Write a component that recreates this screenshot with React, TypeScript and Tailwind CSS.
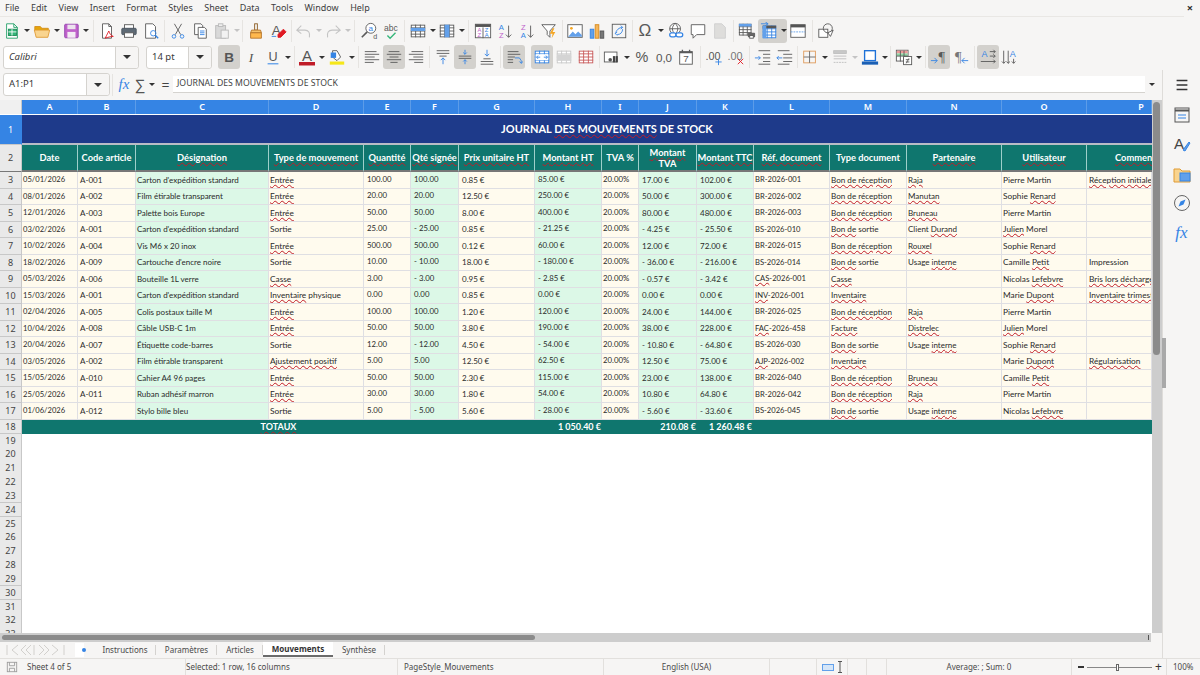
import React from "react";

const UI = "font-['Noto_Sans',sans-serif]";
const LATO = "font-['Lato',sans-serif]";
const COLS = "grid grid-cols-[22px_56px_58px_133px_95px_47px_48px_76px_67px_37px_58px_57px_76px_77px_95px_85px_65px]";

const G = "#5a5a5a";
const B = "#3584e4";
const LB = "#62a0ea";

const Svg = ({ children, s = "w-[18px] h-[18px]" }: { children: React.ReactNode; s?: string }) => (
  <svg viewBox="0 0 20 20" fill="none" className={s} strokeWidth="1" stroke={G}>{children}</svg>
);
const Txt = (p: { x: number; y: number; c?: string; z?: number; w?: number; f?: string; it?: boolean; children: React.ReactNode }) => (
  <text x={p.x} y={p.y} fill={p.c ?? G} stroke="none" fontSize={p.z ?? 9} fontWeight={p.w ?? 400} fontStyle={p.it ? "italic" : "normal"} fontFamily={p.f ?? "Liberation Sans"} textAnchor="middle">{p.children}</text>
);
const Lines = ({ l }: { l: [number, number, number][] }) => (
  <>{l.map(([a, b, y], i) => <path key={i} d={`M${a} ${y}H${b}`} />)}</>
);
const Table = ({ x = 2, y = 3, w = 16, h = 14, c = G }: { x?: number; y?: number; w?: number; h?: number; c?: string }) => (
  <g stroke={c}>
    <rect x={x + .5} y={y + .5} width={w - 1} height={h - 1} fill="#fff" />
    <path d={`M${x} ${y + h / 4}H${x + w}M${x} ${y + h / 2}H${x + w}M${x} ${y + 3 * h / 4}H${x + w}M${x + w / 3} ${y}V${y + h}M${x + 2 * w / 3} ${y}V${y + h}`} />
  </g>
);

const I: Record<string, React.ReactNode> = {
  neu: <Svg><path d="M4 2h8l4 4v12H4z" fill="#fff" stroke="#26a269" /><path d="M12 2v4h4" stroke="#26a269" /><rect x="6" y="8" width="9" height="7" fill="#33b679" stroke="#1c8a56" /><path d="M6 11h9M10 8v7" stroke="#fff" /></Svg>,
  open: <Svg><path d="M2 5h6l2 2h7v3H2z" fill="#e5a50a" stroke="#d48f1d" /><path d="M1.5 9h17l-2 8h-13z" fill="#f9d48f" stroke="#e09b35" /></Svg>,
  save: <Svg><rect x="3" y="2.5" width="15" height="15" rx="1" fill="#c061cb" stroke="#9141ac" /><rect x="6" y="3" width="9" height="5" fill="#ece3ee" stroke="none" /><rect x="6" y="11" width="9" height="6.5" fill="#f3eaf4" stroke="none" /></Svg>,
  pdf: <Svg><path d="M5 2h7l3 3v13H5z" fill="#fff" /><path d="M12 2v3h3" /><path d="M8 18c2-4 3-6 4-8 1 3 2 5 5 6-3 0-6 1-9 2z" stroke="#e01b24" /></Svg>,
  print: <Svg><rect x="5" y="3" width="10" height="5" fill="#fff" /><rect x="2" y="7" width="16" height="7" rx="1" fill="#5e6a75" stroke="#4a5560" /><rect x="5" y="12" width="10" height="5" fill="#fff" /></Svg>,
  prev: <Svg><path d="M4 2h8l3 3v13H4z" fill="#fff" /><circle cx="12.5" cy="12.5" r="3" stroke={B} /><path d="M15 15l3 3" stroke={B} strokeWidth="1.6" /></Svg>,
  cut: <Svg><path d="M6 2l7 12M14 2L7 14" /><circle cx="5.5" cy="16" r="2" stroke={B} /><circle cx="14.5" cy="16" r="2" stroke={B} /></Svg>,
  copy: <Svg><path d="M4 2h7l2 2v10H4z" fill="#fff" /><path d="M8 6h7l2 2v10H8z" fill="#fff" /><path d="M10 10h5M10 12h5M10 14h5" stroke={B} /></Svg>,
  paste: <Svg><g stroke="#b9b9b9"><rect x="3" y="4" width="11" height="14" fill="#d9d9d9" /><rect x="6" y="2" width="5" height="3" fill="#eee" /><rect x="9" y="9" width="8" height="9" fill="#f2f2f2" /></g></Svg>,
  clone: <Svg><rect x="8.5" y="2" width="3" height="7" stroke="#8a5a20" /><path d="M5 9h10l1 3H4z" fill="#f5c26b" stroke="#b5742a" /><path d="M4 12h12v6H4z" fill="#ffb84d" stroke="#b5742a" /></Svg>,
  clear: <Svg><Txt x={8} y={14} z={15} c={G}>A</Txt><path d="M3 16h5" stroke={B} /><path d="M10 14l6-6 3 3-6 6h-3z" fill="#e01b24" stroke="#e01b24" /></Svg>,
  undo: <Svg><g stroke="#c4c4c4"><path d="M7 4L2 9l5 4M2 9h9c4 0 6 3 5 8" strokeWidth="1.2" /></g></Svg>,
  redo: <Svg><g stroke="#c4c4c4"><path d="M13 4l5 5-5 4M18 9H9c-4 0-6 3-5 8" strokeWidth="1.2" /></g></Svg>,
  find: <Svg><circle cx="12" cy="7" r="5.5" fill="#fff" /><path d="M8 11l-6 6" strokeWidth="1.8" /><Txt x={12} y={10} z={9} c={B}>a</Txt><Txt x={17} y={19} z={8}>d</Txt></Svg>,
  spell: <Svg><Txt x={10} y={10} z={9.5} c={G}>abc</Txt><path d="M6 15l3 3 6-6" stroke="#33b679" strokeWidth="1.5" /></Svg>,
  row: <Svg><Table /><rect x="2" y="6.5" width="16" height="3.5" fill={LB} stroke="none" /></Svg>,
  col: <Svg><Table /><rect x="7.3" y="3" width="5.4" height="14" fill={LB} stroke="none" /></Svg>,
  sort: <Svg><rect x="1.5" y="2.5" width="17" height="15" fill="#fff" /><rect x="1.5" y="2.5" width="17" height="3" fill="#555" stroke="none" /><Txt x={6} y={11} z={6.5} c="#c061cb">A</Txt><Txt x={6} y={17} z={6.5} c="#c061cb">Z</Txt><Txt x={14} y={11} z={6.5} c={B}>Z</Txt><Txt x={14} y={17} z={6.5} c={B}>A</Txt><path d="M10 6v12" /></Svg>,
  asc: <Svg><Txt x={6} y={9} z={8.5} c={B}>A</Txt><Txt x={6} y={18} z={8.5} c="#c061cb">Z</Txt><path d="M14 4v13M11 14l3 3 3-3" /></Svg>,
  desc: <Svg><Txt x={6} y={9} z={8.5} c="#c061cb">Z</Txt><Txt x={6} y={18} z={8.5} c={B}>A</Txt><path d="M14 4v13M11 14l3 3 3-3" /></Svg>,
  filter: <Svg><path d="M2 3h15l-6 7v7l-3-3v-4z" fill="#fff" /><path d="M14 7l-3 6h3l-1 5 4-7h-3l2-4z" fill="#f5a623" stroke="none" /></Svg>,
  img: <Svg><rect x="2" y="3" width="16" height="14" fill="#fff" /><circle cx="6" cy="7" r="1.5" fill="#f5a623" stroke="none" /><path d="M2.5 16.5l5-6 3 3 3-3 4 4v2z" fill={LB} stroke="none" /></Svg>,
  chart: <Svg><rect x="2.5" y="8" width="4" height="10" fill={LB} stroke={B} /><rect x="8" y="3" width="4" height="15" fill="#f5b65b" stroke="#d98a1d" /><rect x="13.5" y="10" width="4" height="8" fill="#777" stroke="#555" /></Svg>,
  pivot: <Svg><rect x="2.5" y="2.5" width="15" height="15" fill="#f5f5f5" /><path d="M6 13c1-4 4-7 8-7M12 4l2 2-2 2M8 11l-2 2 2 2M14 8c0 3-2 6-6 6" stroke={B} /></Svg>,
  omega: <Svg><Txt x={10} y={16} z={19}>Ω</Txt></Svg>,
  link: <Svg><circle cx="9" cy="7.5" r="6" fill="#fff" /><path d="M3 7.5h12M9 1.5c-4 4-4 8 0 12M9 1.5c4 4 4 8 0 12" /><g stroke={B} strokeWidth="1.4"><rect x="3" y="12" width="7" height="4.5" rx="2.2" fill="#fff" /><rect x="10" y="12" width="7.5" height="4.5" rx="2.2" fill="#fff" /></g></Svg>,
  comment: <Svg><path d="M2.5 3h15v11h-9l-4 4v-4h-2z" fill="#fff" /></Svg>,
  hf: <Svg><path d="M4 2h8l4 4v12H4z" fill="#dedddb" stroke="#cfcfcf" /></Svg>,
  parea: <Svg><Table x={1} y={2} w={14} h={13} /><rect x="1" y="2" width="14" height="3" fill={LB} stroke="none" /><rect x="11" y="12" width="8" height="5" rx="1" fill="#666" stroke="none" /><rect x="13" y="15" width="4" height="3" fill="#fff" /></Svg>,
  freeze: <Svg><Table x={3} y={4} w={15} h={14} c={B} /><rect x="3" y="4" width="15" height="3" fill="#555" stroke="none" /><rect x="3" y="4" width="4" height="14" fill={LB} stroke="none" /><path d="M1 2h8M6 0l3 2-3 2" stroke={B} /></Svg>,
  split: <Svg><rect x="2" y="3" width="16" height="14" fill="#fff" /><rect x="2" y="3" width="16" height="3" fill="#555" stroke="none" /><path d="M2 11h16" stroke={LB} strokeDasharray="2 1" /></Svg>,
  shapes: <Svg><rect x="2" y="8" width="10" height="9" fill="#fff" /><circle cx="12" cy="7" r="5" /><path d="M12 12l6-3-3 7z" fill="#fff" /></Svg>,
  bold: <Svg><Txt x={10} y={15} z={15} w={700} c="#555">B</Txt></Svg>,
  ital: <Svg><Txt x={10} y={15} z={15} it f="Liberation Serif" c="#555">I</Txt></Svg>,
  und: <Svg><Txt x={10} y={14} z={14} c="#555">U</Txt><path d="M4 17.500h12" stroke={LB} strokeWidth="1.500" /></Svg>,
  fcolor: <Svg s="w-[20px] h-[20px]"><Txt x={10} y={14} z={15} c="#555">A</Txt><rect x="2" y="15" width="16" height="3.500" fill="#c01c28" stroke="none" /></Svg>,
  bg: <Svg><path d="M5 3h5l4 7-4 4-4-3z" fill="#fff" /><rect x="3" y="5" width="6" height="6" fill={B} stroke="none" /><rect x="2" y="15" width="16" height="3.500" fill="#f6e71a" stroke="none" /></Svg>,
  al: <Svg><Lines l={[[2, 15, 4], [2, 18, 7], [2, 13, 10], [2, 18, 13], [2, 12, 16]]} /></Svg>,
  ac: <Svg><Lines l={[[4, 16, 4], [2, 18, 7], [5, 15, 10], [2, 18, 13], [6, 14, 16]]} /></Svg>,
  ar: <Svg><Lines l={[[5, 18, 4], [2, 18, 7], [7, 18, 10], [2, 18, 13], [8, 18, 16]]} /></Svg>,
  vt: <Svg><Lines l={[[3, 17, 3], [3, 17, 6], [6, 14, 9]]} /><path d="M10 18v-7M7.500 13.500L10 11l2.500 2.500" stroke={B} /></Svg>,
  vc: <Svg><Lines l={[[3, 17, 9], [3, 17, 11.500]]} /><path d="M10 2v5M8 5l2 2 2-2M10 18v-5M8 15l2-2 2 2" stroke={B} /></Svg>,
  vb: <Svg><Lines l={[[6, 14, 12], [3, 17, 15], [3, 17, 18]]} /><path d="M10 2v7M7.500 6.500L10 9l2.500-2.500" stroke={B} /></Svg>,
  wrap: <Svg><Lines l={[[3, 15, 4], [3, 17, 7], [3, 11, 10], [3, 9, 13], [3, 9, 16]]} /><path d="M11 11h5l2 3v3M16 15l2 2 2-2" stroke={B} /></Svg>,
  merge: <Svg><Table x={2} y={3} w={16} h={14} c={B} /><rect x="3" y="7" width="14" height="6.500" fill="#fff" stroke="none" /><path d="M4 10.200h4M12 10.200h4M5.500 8.500L4 10.200l1.500 1.800M14.500 8.500l1.500 1.700-1.500 1.800" stroke={B} /></Svg>,
  mergeg: <Svg><Table x={2} y={3} w={16} h={14} c="#c8c8c8" /><rect x="2" y="7" width="16" height="7" fill="#d4d4d4" stroke="none" /></Svg>,
  unm: <Svg><Table x={2} y={3} w={16} h={14} c="#c85a5a" /></Svg>,
  cur: <Svg><rect x="1.500" y="4.500" width="14" height="11" fill="#fff" /><circle cx="8" cy="13" r="2" fill="#555" stroke="none" /><rect x="11" y="9" width="2.500" height="7" fill="#444" stroke="none" /><rect x="14" y="9" width="2.500" height="7" fill="#444" stroke="none" /></Svg>,
  pct: <Svg><Txt x={10} y={16} z={16} c="#555">%</Txt></Svg>,
  num: <Svg><Txt x={10} y={15} z={13} c="#555">0,0</Txt></Svg>,
  date: <Svg><rect x="3" y="4" width="14" height="14" fill="#fff" /><path d="M3 5h14M6 2v3M14 2v3" strokeWidth="1.500" /><Txt x={10} y={16} z={11}>7</Txt></Svg>,
  dadd: <Svg><Txt x={9} y={13} z={12} c="#555">.00</Txt><path d="M15 12v7M11.500 15.500h7" stroke={B} /></Svg>,
  ddel: <Svg><Txt x={9} y={13} z={12} c="#777">.00</Txt><path d="M12 12l6 6M18 12l-6 6" stroke="#e01b24" /></Svg>,
  ind: <Svg><Lines l={[[5, 18, 3], [10, 18, 7], [10, 18, 11], [10, 18, 15], [5, 18, 18]]} /><path d="M1 11h6M5 9l2 2-2 2" stroke={B} /></Svg>,
  out: <Svg><Lines l={[[2, 15, 3], [8, 18, 7], [8, 18, 11], [8, 18, 15], [2, 15, 18]]} /><path d="M7 11H1M3 9l-2 2 2 2" stroke={B} /></Svg>,
  bord: <Svg><rect x="3" y="3.500" width="13" height="13" stroke="#e09b5b" /><path d="M3 10h13M9.500 3.500v13" stroke="#666" /></Svg>,
  bstyle: <Svg><g stroke="#bdbdbd"><rect x="3" y="3" width="14" height="3" fill="#c9c9c9" /><path d="M3 9h14M3 12h14" /><path d="M3 16h14" strokeDasharray="2 1" /></g></Svg>,
  bcolor: <Svg><rect x="4" y="3" width="12" height="11" fill="#fff" stroke="#1c71d8" strokeWidth="1.500" /><rect x="1" y="15" width="18" height="3.500" fill="#1a5fb4" stroke="none" /></Svg>,
  cond: <Svg><rect x="1.500" y="2.500" width="13" height="12" fill="#fff" /><rect x="2" y="3" width="12" height="3" fill="#ed9a9a" stroke="none" /><rect x="2" y="6" width="12" height="3" fill="#90d6a5" stroke="none" /><path d="M1.500 9h13M6 3v12M10 3v12" /><rect x="9.500" y="9.500" width="9" height="9" fill="#fff" /><path d="M12 13h4M12 15.500h4M15.500 11.500l-3 5.500" /></Svg>,
  ltr: <Svg><Txt x={13} y={15} z={16} f="Liberation Serif">¶</Txt><path d="M1 14h7M5 11l3 3-3 3" stroke={B} /></Svg>,
  rtl: <Svg><Txt x={7} y={15} z={16} f="Liberation Serif" c="#777">¶</Txt><path d="M18 14h-7M14 11l-3 3 3 3" stroke={B} /></Svg>,
  hz: <Svg><Txt x={6} y={10} z={10} c={B}>A</Txt><path d="M12 4h6M16 2l2 2-2 2M12 9h6M16 7l2 2-2 2M2 15h16M16 13l2 2-2 2" /></Svg>,
  vr: <Svg><Txt x={13} y={10} z={10} c={B}>A</Txt><path d="M3 3v14M1 15l2 2 2-2M8 3v14M6 15l2 2 2-2M14 12v5M12 15l2 2 2-2" /></Svg>,
};

const Tri = ({ c = "border-t-[#333]" }: { c?: string }) => (
  <span className={`w-0 h-0 border-l-[3px] border-r-[3px] border-t-[3px] border-l-transparent border-r-transparent ${c}`} />
);
const A = ({ w = "w-[8px]", off }: { w?: string; off?: boolean }) => (
  <div className={`${w} h-[24px] flex items-center justify-center shrink-0`}><Tri c={off ? "border-t-[#c4c4c4]" : "border-t-[#333]"} /></div>
);
const S = ({ w = "w-[5px]" }: { w?: string }) => (
  <div className={`${w} h-[24px] flex items-center justify-center shrink-0`}><div className="w-px h-[22px] bg-[#e6e4e1]" /></div>
);
const Btn = ({ n, on }: { n: string; on?: boolean }) => (
  <div className={`w-[22px] h-[24px] rounded-[3px] flex items-center justify-center shrink-0 ${on ? "bg-[#d3d1cd]" : ""}`}>{I[n]}</div>
);

const Combo = ({ w, dw, text, it }: { w: string; dw: string; text: string; it?: boolean }) => (
  <div className={`${w} h-[23px] bg-white border border-[#d5d3cf] rounded-[3px] flex items-stretch shrink-0`}>
    <div className={`flex-1 flex items-center pl-[5px] text-[9.5px] text-[#3a3a3a] ${it ? "italic" : ""} ${UI}`}>{text}</div>
    <div className={`${dw} bg-[#f6f5f4] border-l border-[#d5d3cf] rounded-r-[3px] flex items-center justify-center`}>
      <span className="w-0 h-0 border-l-[4px] border-r-[4px] border-t-[4px] border-l-transparent border-r-transparent border-t-[#333]" />
    </div>
  </div>
);

const Wavy = ({ t }: { t: string }) => (
  <>
    {t.split("*").map((p, i) =>
      i % 2 ? (
        <span key={i} className="underline decoration-wavy decoration-[#c01c28] decoration-1 underline-offset-1">{p}</span>
      ) : (
        <span key={i}>{p}</span>
      )
    )}
  </>
);

const letters = "ABCDEFGHIJKLMNO".split("");
const pads = ["pl-px", "pl-0.5", "pl-px", "pl-px", "pl-[3px]", "pl-[3px]", "pl-[3px]", "pl-[3px]", "pl-px", "pl-[3px]", "pl-[3px]", "pl-px", "pl-px", "pl-px", "pl-px", "pl-0.5"];
const sizes = ["text-[7.6px]", "text-[8px]", "text-[8px]", "text-[8.3px]", "text-[7.8px]", "text-[7.8px]", "text-[8px]", "text-[7.8px]", "text-[7.8px]", "text-[8px]", "text-[8px]", "text-[7.6px]", "text-[8.1px]", "text-[8px]", "text-[8.3px]", "text-[8.3px]"];
const mint = [2, 5, 7, 9, 10];

const heads = ["Date", "Code article", "*Désignation*", "*Type de mouvement*", "*Quantité*", "*Qté signée*", "*Prix unitaire HT*", "*Montant HT*", "TVA %", "*Montant* TVA", "*Montant TTC*", "*Réf. document*", "Type document", "*Partenaire*", "*Utilisateur*"];

const C1 = "Carton d'expédition standard";
const E = "*Entrée*";
const BR = "*Bon de réception*";
const BS = "*Bon de* sortie";
const R = "20.00%";
const rows: string[][] = [
  ["05/01/2026", "A-001", C1, E, "100.00", "100.00", "0.85 €", "85.00 €", R, "17.00 €", "102.00 €", "BR-2026-001", BR, "*Raja*", "Pierre Martin", "*Réception initiale*"],
  ["08/01/2026", "A-002", "Film étirable transparent", E, "20.00", "20.00", "12.50 €", "250.00 €", R, "50.00 €", "300.00 €", "BR-2026-002", BR, "*Manutan*", "Sophie *Renard*", ""],
  ["12/01/2026", "A-003", "Palette bois Europe", E, "50.00", "50.00", "8.00 €", "400.00 €", R, "80.00 €", "480.00 €", "BR-2026-003", BR, "*Bruneau*", "Pierre Martin", ""],
  ["03/02/2026", "A-001", C1, "Sortie", "25.00", "- 25.00", "0.85 €", "- 21.25 €", R, "- 4.25 €", "- 25.50 €", "BS-2026-010", BS, "Client *Durand*", "*Julien* Morel", ""],
  ["10/02/2026", "A-004", "Vis M6 x 20 inox", E, "500.00", "500.00", "0.12 €", "60.00 €", R, "12.00 €", "72.00 €", "BR-2026-015", BR, "*Rouxel*", "Sophie *Renard*", ""],
  ["18/02/2026", "A-009", "Cartouche d'encre noire", "Sortie", "10.00", "- 10.00", "18.00 €", "- 180.00 €", R, "- 36.00 €", "- 216.00 €", "BS-2026-014", BS, "Usage *interne*", "Camille *Petit*", "Impression"],
  ["05/03/2026", "A-006", "Bouteille 1L verre", "*Casse*", "3.00", "- 3.00", "0.95 €", "- 2.85 €", R, "- 0.57 €", "- 3.42 €", "*CAS*-2026-001", "*Casse*", "", "Nicolas *Lefebvre*", "*Bris lors déchargement*"],
  ["15/03/2026", "A-001", C1, "*Inventaire* physique", "0.00", "0.00", "0.85 €", "0.00 €", R, "0.00 €", "0.00 €", "*INV*-2026-001", "*Inventaire*", "", "Marie *Dupont*", "*Inventaire trimestriel*"],
  ["02/04/2026", "A-005", "Colis postaux taille M", E, "100.00", "100.00", "1.20 €", "120.00 €", R, "24.00 €", "144.00 €", "BR-2026-025", BR, "*Raja*", "Pierre Martin", ""],
  ["10/04/2026", "A-008", "Câble USB-C 1m", E, "50.00", "50.00", "3.80 €", "190.00 €", R, "38.00 €", "228.00 €", "*FAC*-2026-458", "*Facture*", "*Distrelec*", "*Julien* Morel", ""],
  ["20/04/2026", "A-007", "Étiquette code-barres", "Sortie", "12.00", "- 12.00", "4.50 €", "- 54.00 €", R, "- 10.80 €", "- 64.80 €", "BS-2026-030", BS, "Usage *interne*", "Sophie *Renard*", ""],
  ["03/05/2026", "A-002", "Film étirable transparent", "*Ajustement positif*", "5.00", "5.00", "12.50 €", "62.50 €", R, "12.50 €", "75.00 €", "*AJP*-2026-002", "*Inventaire*", "", "Marie *Dupont*", "*Régularisation*"],
  ["15/05/2026", "A-010", "Cahier A4 96 pages", E, "50.00", "50.00", "2.30 €", "115.00 €", R, "23.00 €", "138.00 €", "BR-2026-040", BR, "*Bruneau*", "Camille *Petit*", ""],
  ["25/05/2026", "A-011", "Ruban adhésif marron", E, "30.00", "30.00", "1.80 €", "54.00 €", R, "10.80 €", "64.80 €", "BR-2026-042", BR, "*Raja*", "Pierre Martin", ""],
  ["01/06/2026", "A-012", "Stylo bille bleu", "Sortie", "5.00", "- 5.00", "5.60 €", "- 28.00 €", R, "- 5.60 €", "- 33.60 €", "BS-2026-045", BS, "Usage *interne*", "Nicolas *Lefebvre*", ""],
];
const blanks = Array.from({ length: 15 }, (_, i) => 19 + i);

const RowHead = ({ n, active, bottom = "border-b-[#c8c8c8]" }: { n: number; active?: boolean; bottom?: string }) => (
  <div className={`flex items-center justify-center text-[9px] border-r border-b ${bottom} ${UI} ${active ? "bg-[#3584e4] text-white border-r-[#3584e4]" : "bg-[#e9e9e9] text-[#444] border-r-[#c8c8c8]"}`}>{n}</div>
);

const tabs = [
  { t: "Instructions", w: "w-[62px]" },
  { t: "Paramètres", w: "w-[61px]" },
  { t: "Articles", w: "w-[46px]" },
  { t: "Mouvements", w: "w-[70px]", on: true },
  { t: "Synthèse", w: "w-[52px]" },
];

const StatusCell = ({ w, children, c = "" }: { w: string; children?: React.ReactNode; c?: string }) => (
  <div className={`${w} h-full flex items-center border-r border-[#e2e0dd] shrink-0 ${c}`}>{children}</div>
);

export default function App() {
  return (
    <div className={`w-[1200px] h-[675px] overflow-hidden bg-[#f6f5f4] flex flex-col text-[#3d3d3d] ${UI}`}>
      {/* menu */}
      <div className="h-[16px] shrink-0 flex items-center relative text-[9px] text-[#3d3d3d]">
        <div className="flex items-center gap-[11.5px] pl-[5px]">
          {["File", "Edit", "View", "Insert", "Format", "Styles", "Sheet", "Data", "Tools", "Window", "Help"].map((m) => <span key={m}>{m}</span>)}
        </div>
        <span className="absolute right-[7px] top-0 text-[11px] leading-[16px] font-bold text-[#333]">×</span>
      </div>
      {/* toolbar 1 */}
      <div className="h-[28px] shrink-0 flex items-center pl-px mr-[16px] border-t border-[#e9e7e4]">
        <Btn n="neu" /><A /><Btn n="open" /><A w="w-[7px]" /><Btn n="save" /><A /><S w="w-[6px]" />
        <Btn n="pdf" /><Btn n="print" /><Btn n="prev" /><S />
        <Btn n="cut" /><Btn n="copy" /><Btn n="paste" /><A w="w-[7px]" off /><S />
        <Btn n="clone" /><Btn n="clear" /><S w="w-[4px]" />
        <Btn n="undo" /><A w="w-[7px]" off /><Btn n="redo" /><A w="w-[7px]" off /><S w="w-[7px]" />
        <Btn n="find" /><Btn n="spell" /><S />
        <Btn n="row" /><A w="w-[7px]" /><Btn n="col" /><A w="w-[7px]" /><S w="w-[7px]" />
        <Btn n="sort" /><Btn n="asc" /><Btn n="desc" /><Btn n="filter" /><S w="w-[4px]" />
        <Btn n="img" /><Btn n="chart" /><Btn n="pivot" /><S w="w-[4px]" />
        <Btn n="omega" /><A w="w-[9px]" /><Btn n="link" /><Btn n="comment" /><Btn n="hf" /><S />
        <Btn n="parea" />
        <div className="w-[29px] h-[24px] bg-[#d3d1cd] rounded-[3px] flex items-center shrink-0"><Btn n="freeze" /><A w="w-[7px]" /></div>
        <Btn n="split" /><S w="w-[6px]" /><Btn n="shapes" />
      </div>
      {/* toolbar 2 */}
      <div className="h-[26px] shrink-0 flex items-center pl-[3px]">
        <Combo w="w-[136px]" dw="w-[23px]" text="Calibri" it />
        <div className="w-[7px] shrink-0" />
        <Combo w="w-[66px]" dw="w-[23px]" text="14 pt" />
        <div className="w-[6px] shrink-0" />
        <Btn n="bold" on /><Btn n="ital" /><Btn n="und" /><A /><S w="w-[4px]" />
        <Btn n="fcolor" /><A /><Btn n="bg" /><A w="w-[7px]" /><S w="w-[6px]" />
        <Btn n="al" /><Btn n="ac" on /><Btn n="ar" /><S />
        <Btn n="vt" /><Btn n="vc" on /><Btn n="vb" /><S />
        <Btn n="wrap" on /><div className="w-[6px] shrink-0" />
        <Btn n="merge" on /><Btn n="mergeg" /><Btn n="unm" /><S w="w-[4px]" />
        <Btn n="cur" /><A /><Btn n="pct" /><Btn n="num" /><Btn n="date" /><S w="w-[6px]" />
        <Btn n="dadd" /><Btn n="ddel" /><S />
        <Btn n="ind" /><Btn n="out" /><S w="w-[3px]" />
        <Btn n="bord" /><A /><Btn n="bstyle" /><A off /><Btn n="bcolor" /><A w="w-[7px]" /><S />
        <Btn n="cond" /><A w="w-[7px]" /><S w="w-[6px]" />
        <Btn n="ltr" on /><Btn n="rtl" /><S />
        <Btn n="hz" on /><Btn n="vr" />
      </div>
      {/* body */}
      <div className="flex-1 min-h-0 flex">
        <div className="w-[1162px] shrink-0 flex flex-col">
          {/* formula bar */}
          <div className="h-[30px] shrink-0 flex items-center pl-[3px] pb-px">
            <Combo w="w-[107px]" dw="w-[23px]" text="A1:P1" />
            <S w="w-[4px]" />
            <div className="w-[20px] flex justify-center shrink-0"><span className="font-['Liberation_Serif',serif] italic text-[15px] leading-none text-[#3584e4]">fx</span></div>
            <div className="w-[12px] flex justify-center shrink-0 text-[15px] leading-none text-[#555]">∑</div>
            <A w="w-[12px]" />
            <div className="w-[15px] flex justify-center shrink-0 text-[14px] leading-none text-[#444]">=</div>
            <div className="w-[972px] h-[17px] bg-white border-b border-[#d5d3cf] flex items-center pl-[4px] text-[8.7px] text-[#444] shrink-0">JOURNAL DES MOUVEMENTS DE STOCK</div>
            <div className="w-[14px] flex justify-center shrink-0"><Tri /></div>
          </div>
          {/* sheet + v scrollbar */}
          <div className="h-[533px] shrink-0 flex">
            <div className="w-[1152px] shrink-0 bg-white overflow-hidden">
              {/* col headers */}
              <div className={`${COLS} h-[15px] border-b border-white`}>
                <div className="bg-[#f0f0f0] border-r border-[#c8c8c8]" />
                {[...letters, "P"].map((l, i) => (
                  <div key={l} className={`bg-[#3584e4] text-white text-[9px] font-semibold border-r border-[#5c9ce8] overflow-hidden ${i === 15 ? "flex justify-start" : "flex items-center justify-center"}`}>
                    {i === 15 ? <span className="w-[108px] shrink-0 text-center">{l}</span> : l}
                  </div>
                ))}
              </div>
              {/* row 1 */}
              <div className={`${COLS} h-[30px]`}>
                <RowHead n={1} active />
                <div className={`col-span-16 bg-[#1e3a8a] border-b-2 border-[#b9bcc6] flex items-center justify-center pl-[40px] text-white font-bold text-[11px] ${LATO}`}><span><Wavy t="JOURNAL *DES MOUVEMENTS* DE STOCK" /></span></div>
              </div>
              {/* row 2 */}
              <div className={`${COLS} h-[27px]`}>
                <RowHead n={2} bottom="border-b-[#777]" />
                {heads.map((h, i) => (
                  <div key={i} className={`bg-[#0f766e] border-r border-[#9ecfca] border-b-2 border-b-[#777] flex items-center justify-center text-center text-white font-bold text-[9.3px] leading-[11px] px-px ${i === 9 ? "" : "whitespace-nowrap"} ${LATO}`}>
                    <span><Wavy t={h} /></span>
                  </div>
                ))}
                <div className={`bg-[#0f766e] border-b-2 border-b-[#777] overflow-hidden flex items-center text-white font-bold text-[9.3px] ${LATO}`}>
                  <span className="w-[116px] shrink-0 text-center"><Wavy t="*Commentaires*" /></span>
                </div>
              </div>
              {/* data */}
              {rows.map((r, ri) => (
                <div key={ri} className={`${COLS} h-[16.5px]`}>
                  <RowHead n={ri + 3} />
                  {r.map((c, ci) => (
                    <div key={ci} className={`${mint.includes(ci) ? "bg-[#dcf8e7]" : "bg-[#fffbee]"} border-r border-b border-[#dfdfe3] flex items-center overflow-hidden whitespace-nowrap text-[#2a2a2a] ${sizes[ci]} ${pads[ci]} ${LATO}`}>
                      <span className="shrink-0"><Wavy t={c} /></span>
                    </div>
                  ))}
                </div>
              ))}
              {/* totals */}
              <div className={`${COLS} h-[14px]`}>
                <RowHead n={18} />
                <div className={`col-span-7 bg-[#0f766e] flex items-center justify-center text-white font-bold text-[9px] ${LATO}`}><span><Wavy t="*TOTAUX*" /></span></div>
                <div className={`bg-[#0f766e] flex items-center justify-end pr-px text-white font-bold text-[9px] whitespace-nowrap ${LATO}`}>1 050.40 €</div>
                <div className="bg-[#0f766e]" />
                <div className={`bg-[#0f766e] flex items-center justify-end pr-px text-white font-bold text-[9px] whitespace-nowrap ${LATO}`}>210.08 €</div>
                <div className={`bg-[#0f766e] flex items-center justify-end pr-0.5 text-white font-bold text-[9px] whitespace-nowrap ${LATO}`}>1 260.48 €</div>
                <div className="col-span-5 bg-[#0f766e]" />
              </div>
              {/* blank rows */}
              {blanks.map((n) => (
                <div key={n} className={`${COLS} h-[13.85px]`}>
                  <RowHead n={n} />
                  <div className="col-span-16 bg-white" />
                </div>
              ))}
            </div>
            <div className="w-[10px] shrink-0 bg-[#cdcdcd] pl-px pr-[2px] pt-[2px]">
              <div className="h-[253px] bg-[#8b8b8b] rounded-full" />
            </div>
          </div>
          {/* h scrollbar */}
          <div className="h-[9px] shrink-0 flex">
            <div className="w-[1151px] bg-[#cdcdcd] pt-[2px] pl-[2px] relative">
              <div className="w-[533px] h-[5px] bg-[#8b8b8b] rounded-full" />
              <div className="absolute right-[2px] top-[2px] w-px h-[5px] bg-[#555]" />
            </div>
          </div>
          {/* tabs */}
          <div className="h-[15px] shrink-0 flex items-center text-[8px] text-[#4a4a4a]">
            <div className="w-[70px] shrink-0 pl-[6px] flex items-center">
              <svg viewBox="0 0 60 12" fill="none" className="w-[60px] h-[12px]" stroke="#d2d0cd">
                <path d="M1 1v10M12 1 6 6l6 5M20 1l-5 5 5 5M25 1l-5 5 5 5M28 1v10M33 1l5 5-5 5M38 1l5 5-5 5M46 1l6 5-6 5M58 1v10" />
              </svg>
            </div>
            <div className="w-[20px] h-[15px] shrink-0 flex items-center pl-[5px]">
              <div className="w-[9px] h-[14px] bg-white relative">
                <span className="absolute left-[7px] top-[5px] w-[4px] h-[4px] rounded-full bg-[#3584e4]" />
              </div>
            </div>
            <div className="w-[4px] shrink-0" />
            {tabs.map((t) => (
              <div key={t.t} className={`${t.w} h-[15px] flex items-center justify-center shrink-0 relative whitespace-nowrap ${t.on ? "bg-white font-bold text-[#333] border-b-2 border-[#6b6b6b]" : ""}`}>
                {t.t}
                {!t.on && <span className="absolute right-0 top-[3px] w-px h-[10px] bg-[#d4d2cf]" />}
              </div>
            ))}
          </div>
        </div>
        {/* sidebar */}
        <div className="flex-1 border-l border-[#dedcd9] relative flex flex-col items-center pt-[5px] gap-[9.500px]">
          <div className="absolute left-[-1px] top-[268px] w-[4px] h-[50px] bg-[#a9a9a9]" />
          <div className="h-[20px] flex items-center justify-center">
            <svg viewBox="0 0 20 20" className="w-[18px] h-[18px]" stroke="#333" strokeWidth="1.500"><path d="M4 5h12M4 10h12M4 15h12" /></svg>
          </div>
          <svg viewBox="0 0 20 20" fill="none" className="w-5 h-5" stroke="#555"><rect x="3" y="3" width="14" height="14" /><path d="M3 5.500h14" strokeWidth="2" /><path d="M6 10h8M6 13h8" stroke="#3584e4" /></svg>
          <svg viewBox="0 0 20 20" fill="none" className="w-5 h-5"><text x="7" y="15" fontSize="15" fill="#444" fontFamily="Liberation Sans" textAnchor="middle">A</text><path d="M11 16l6-8 1 1-5 8z" fill="#62a0ea" stroke="#3584e4" /></svg>
          <svg viewBox="0 0 20 20" fill="none" className="w-5 h-5"><path d="M2 5h6l2 2h8v11H2z" fill="#f9d48f" stroke="#e09b35" /><rect x="8" y="9" width="10" height="8" fill="#62a0ea" stroke="#3584e4" /></svg>
          <svg viewBox="0 0 20 20" fill="none" className="w-5 h-5"><circle cx="10" cy="10" r="7.500" stroke="#666" /><path d="M13.500 6.500L11.500 11.500 6.500 13.500 8.500 8.500z" fill="#3584e4" /></svg>
          <span className="font-['Liberation_Serif',serif] italic text-[17px] leading-[20px] text-[#3584e4]">fx</span>
        </div>
      </div>
      {/* status bar */}
      <div className="h-[17px] shrink-0 border-t border-[#e2e0dd] flex items-center text-[8px] text-[#4a4a4a]">
        <StatusCell w="w-[186px]" c="pl-[6px] gap-[9px]">
          <svg viewBox="0 0 14 14" fill="none" className="w-[12px] h-[12px]" stroke="#999"><rect x="1.500" y="1.500" width="11" height="11" /><path d="M4 1.500v4h6v-4M4 12.500v-4h6v4" /></svg>
          Sheet 4 of 5
        </StatusCell>
        <StatusCell w="w-[212px]">Selected: 1 row, 16 columns</StatusCell>
        <StatusCell w="w-[206px]" c="pl-[6px]">PageStyle_Mouvements</StatusCell>
        <StatusCell w="w-[166px]" c="justify-center">English (USA)</StatusCell>
        <StatusCell w="w-[47px]" />
        <StatusCell w="w-[31px]" c="justify-center gap-[3px]">
          <span className="w-[12px] h-[7px] bg-[#d5e6f8] border border-[#62a0ea] shrink-0" />
          <svg viewBox="0 0 6 12" className="w-[6px] h-[12px] shrink-0" fill="none" stroke="#555"><path d="M1 .5h4M3 .5v11M1 11.500h4" /></svg>
        </StatusCell>
        <StatusCell w="w-[19px]" />
        <StatusCell w="w-[20px]" />
        <StatusCell w="w-[185px]" c="justify-center">Average: ; Sum: 0</StatusCell>
        <StatusCell w="w-[95px]" c="pl-[6px] gap-[3px]">
          <span className="w-[6px] h-[1.500px] bg-[#333] shrink-0" />
          <div className="w-[65px] h-px bg-[#888] relative shrink-0">
            <span className="absolute left-[29px] top-[-3px] w-[3px] h-[7px] bg-white border border-[#666]" />
          </div>
          <span className="text-[12px] leading-none text-[#333]">+</span>
        </StatusCell>
        <span className="pl-[6px]">100%</span>
      </div>
    </div>
  );
}
